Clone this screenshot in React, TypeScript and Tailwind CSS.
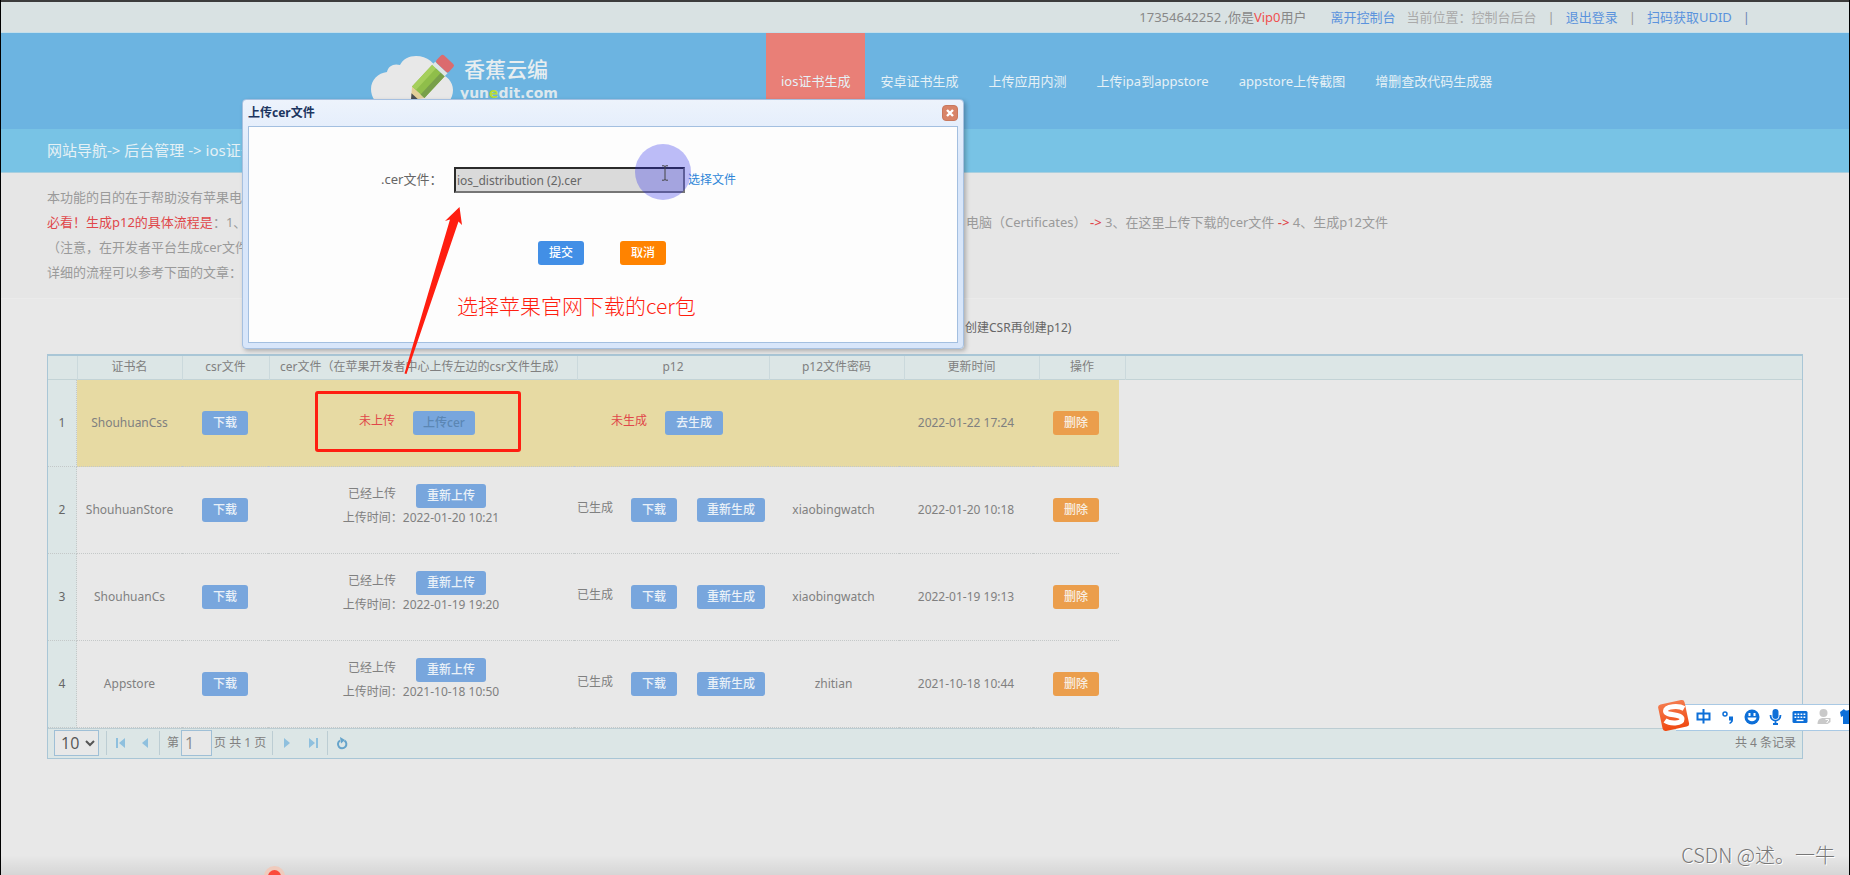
import type { ReactNode } from "react";

type Cert = {
  name: string;
  uploadedAt?: string;
  password?: string;
  updatedAt: string;
};

const certs: Cert[] = [
  { name: "ShouhuanCss", updatedAt: "2022-01-22 17:24" },
  { name: "ShouhuanStore", uploadedAt: "2022-01-20 10:21", password: "xiaobingwatch", updatedAt: "2022-01-20 10:18" },
  { name: "ShouhuanCs", uploadedAt: "2022-01-19 19:20", password: "xiaobingwatch", updatedAt: "2022-01-19 19:13" },
  { name: "Appstore", uploadedAt: "2021-10-18 10:50", password: "zhitian", updatedAt: "2021-10-18 10:44" },
];

const navItems = ["ios证书生成", "安卓证书生成", "上传应用内测", "上传ipa到appstore", "appstore上传截图", "增删查改代码生成器"];

function Btn({ children, className = "" }: { children: ReactNode; className?: string }) {
  return (
    <button type="button" className={`h-6 shrink-0 rounded-[3px] text-center text-xs font-medium ${className}`}>
      {children}
    </button>
  );
}

function Logo() {
  return (
    <a href="#" className="flex items-start">
      <svg width="86" height="66" viewBox="0 0 86 66">
        <path
          d="M15 62C6 60 1 52 1 44c0-9 7-16 16-17 1-6 7-9 13-7C33 14 39 11 46 11c11 0 20 7 22 17 9 2 15 9 15 17 0 9-6 16-14 17z"
          fill="#e8e8e8"
        />
        <g transform="translate(41 55) rotate(-47) scale(1.06)">
          <path d="M0 0 L10 -8 L10 8 Z" fill="#e3cf98" />
          <path d="M0 0 L5 -4 L5 4 Z" fill="#4a4f55" />
          <rect x="10" y="-8" width="28" height="16" fill="#8fbe4a" />
          <rect x="10" y="-8" width="28" height="5" fill="#a5cf5c" />
          <rect x="10" y="3" width="28" height="5" fill="#789f4a" />
          <rect x="38" y="-8" width="4" height="16" fill="#dfe6e4" />
          <rect x="42" y="-8" width="10" height="16" rx="2" fill="#db6b6e" />
        </g>
      </svg>
      <div className="pt-[10px] pl-1">
        <div className="pl-1 text-[21px] leading-7 font-medium text-[#e8eef0]">香蕉云编</div>
        <div className="font-['DejaVu_Sans',sans-serif] text-sm leading-5 font-bold text-[#dde8ee]">
          yun<span className="text-[#b9dc3c]">e</span>dit.com
        </div>
      </div>
    </a>
  );
}

function TopBar() {
  return (
    <div className="flex h-[33px] items-center justify-end border-t-2 border-b border-t-[#3c3c3c] border-b-[#c5dfea] bg-[#d9e2e3] pt-[2px] pr-[99px] text-[13px] text-[#999]">
      <span className="mr-6 text-[#888]">
        17354642252 ,你是<span className="text-[#f0504f]">Vip0</span>用户
      </span>
      <a href="#" className="mr-[11px] text-[#5b93dd]">离开控制台</a>
      <span className="mr-[11px] text-[#aaa]">当前位置：控制台后台</span>
      <span className="mr-[11px]">|</span>
      <a href="#" className="mr-[11px] text-[#5b93dd]">退出登录</a>
      <span className="mr-[11px]">|</span>
      <a href="#" className="mr-[11px] text-[#5b93dd]">扫码获取UDID</a>
      <span className="text-[#6d86b5]">|</span>
    </div>
  );
}

function Header() {
  return (
    <header>
      <div className="h-24 bg-[#6cb4e1]">
        <div className="mx-auto flex h-full max-w-[1170px] pl-[30px]">
          <div className="w-[396px] shrink-0 pt-3">
            <Logo />
          </div>
          <nav className="flex text-[13px] whitespace-nowrap text-[#e6f1f6]">
            {navItems.map((item, i) => (
              <a key={item} href="#" className={`px-[15px] pt-[38px] leading-5 ${i === 0 ? "bg-[#e97f77]" : ""}`}>
                {item}
              </a>
            ))}
          </nav>
        </div>
      </div>
      <div className="flex h-11 items-center border-b border-[#a9cfdf] bg-[#78c3e5] pl-[46px] text-[15px] text-[#e6f1f5]">
        网站导航-&gt; 后台管理 -&gt; ios证书生成
      </div>
    </header>
  );
}

function Intro() {
  return (
    <section className="h-[126px] border-b border-[#ebebeb] bg-[#e6e6e6] pt-3 pl-[46px] text-[13px] leading-[25px] whitespace-nowrap text-[#9a9a9a]">
      <p>本功能的目的在于帮助没有苹果电脑的开发者</p>
      <div className="flex">
        <p className="w-[919px] shrink-0">
          <span className="text-[#e0474a]">必看！生成p12的具体流程是</span>：1、在这里创建csr文件
        </p>
        <p>
          电脑（Certificates） <span className="font-medium text-[#e0474a]">-&gt;</span> 3、在这里上传下载的cer文件{" "}
          <span className="font-medium text-[#e0474a]">-&gt;</span> 4、生成p12文件
        </p>
      </div>
      <p>（注意，在开发者平台生成cer文件）</p>
      <p>
        详细的流程可以参考下面的文章：
        <a href="#" className="text-[#5b93dd]">https</a>
      </p>
    </section>
  );
}

const head = "border-r border-[#cbd9dc] font-normal";
const cell = "border-b border-dotted border-[#c4c8c8] p-0";

function CertTable() {
  return (
    <div className="mx-[46px] border border-t-2 border-[#a9c6d6] text-xs text-[#808080]">
      <table className="w-full table-fixed border-collapse bg-[#dce6e6]">
        <thead>
          <tr className="h-[23px] border-b border-[#c3d3d6]">
            <th className={`w-[29px] ${head}`} aria-label="序号" />
            <th className={`w-[105px] ${head}`}>证书名</th>
            <th className={`w-[87px] ${head}`}>csr文件</th>
            <th className={`w-[308px] whitespace-nowrap ${head}`}>cer文件（在苹果开发者中心上传左边的csr文件生成）</th>
            <th className={`w-[192px] ${head}`}>p12</th>
            <th className={`w-[135px] ${head}`}>p12文件密码</th>
            <th className={`w-[135px] ${head}`}>更新时间</th>
            <th className={`w-[86px] ${head}`}>操作</th>
            <td />
          </tr>
        </thead>
      </table>
      <table className="w-[1071px] table-fixed border-separate border-spacing-0 text-center whitespace-nowrap">
        <colgroup>
          <col className="w-[29px]" />
          <col className="w-[105px]" />
          <col className="w-[86px]" />
          <col className="w-[306px]" />
          <col className="w-[194px]" />
          <col className="w-[131px]" />
          <col className="w-[134px]" />
          <col className="w-[86px]" />
        </colgroup>
        <tbody>
          {certs.map((c, i) => (
            <tr key={c.name} className={`h-[87px] ${c.uploadedAt ? "" : "bg-[#e7daa3]"}`}>
              <td className={`border-r bg-[#dce6e6] text-[#666] ${cell}`}>{i + 1}</td>
              <td className={cell}>{c.name}</td>
              <td className={cell}>
                <Btn className="w-[46px] bg-[#78a6dd] text-[#eaf1f8]">下载</Btn>
              </td>
              <td className={cell}>
                {c.uploadedAt ? (
                  <div className="pb-2">
                    <div className="flex justify-center gap-[20px] pr-2">
                      <span className="leading-5">已经上传</span>
                      <Btn className="w-[70px] bg-[#78a6dd] text-[#eaf1f8]">重新上传</Btn>
                    </div>
                    <div className="leading-5">上传时间：{c.uploadedAt}</div>
                  </div>
                ) : (
                  <div className="flex justify-center gap-[18px] pr-2">
                    <span className="leading-5 text-[#e0474a]">未上传</span>
                    <Btn className="w-[62px] bg-[#78a6dd] text-[#5b86b4]">上传cer</Btn>
                  </div>
                )}
              </td>
              <td className={cell}>
                {c.uploadedAt ? (
                  <div className="flex justify-center">
                    <span className="mr-[18px] leading-5">已生成</span>
                    <Btn className="mr-5 w-[46px] bg-[#78a6dd] text-[#eaf1f8]">下载</Btn>
                    <Btn className="w-[68px] bg-[#78a6dd] text-[#eaf1f8]">重新生成</Btn>
                  </div>
                ) : (
                  <div className="flex justify-center gap-[18px] pr-2">
                    <span className="leading-5 text-[#e0474a]">未生成</span>
                    <Btn className="w-[58px] bg-[#78a6dd] text-[#eaf1f8]">去生成</Btn>
                  </div>
                )}
              </td>
              <td className={cell}>{c.password}</td>
              <td className={cell}>{c.updatedAt}</td>
              <td className={cell}>
                <Btn className="w-[46px] bg-[#eb9e4c] text-[#f8eee2]">删除</Btn>
              </td>
            </tr>
          ))}
        </tbody>
      </table>
      <Pager />
    </div>
  );
}

function PagerIcon({ label, d }: { label: string; d: string }) {
  return (
    <button type="button" aria-label={label} className="flex h-6 w-6 items-center justify-center">
      <svg width="12" height="12" viewBox="0 0 12 12" fill="#8fc0de">
        <path d={d} />
      </svg>
    </button>
  );
}

function Pager() {
  return (
    <div className="flex h-[30px] items-center border-t border-[#bccdd3] bg-[#dce6e6] px-[6px]">
      <div className="relative">
        <select
          aria-label="每页条数"
          className="h-[26px] w-[45px] appearance-none border border-[#9fbfd6] bg-[#e8e8e8] pl-[6px] font-['Open_Sans',sans-serif] text-base leading-5 text-[#555]"
        >
          <option>10</option>
        </select>
        <svg className="pointer-events-none absolute top-[10px] right-[4px]" width="10" height="7" viewBox="0 0 10 7">
          <path d="M1 1l4 4 4-4" fill="none" stroke="#555" strokeWidth="2" />
        </svg>
      </div>
      <span className="mr-[2px] ml-[7px] h-6 w-px bg-[#bccdd3]" />
      <PagerIcon label="首页" d="M1 1h2v10H1zM10 1v10L4 6z" />
      <PagerIcon label="上一页" d="M9 1v10L3 6z" />
      <span className="ml-[2px] h-6 w-px bg-[#bccdd3]" />
      <label className="ml-[7px] flex items-center gap-[2px]">
        第
        <input
          defaultValue="1"
          className="h-[26px] w-[31px] border border-[#9fbfd6] bg-[#e8e8e8] pl-[3px] font-['Open_Sans',sans-serif] text-base text-[#888]"
        />
      </label>
      <span className="mr-[6px] ml-[2px]">页 共 1 页</span>
      <span className="h-6 w-px bg-[#bccdd3]" />
      <span className="flex gap-[2px] px-[2px]">
        <PagerIcon label="下一页" d="M3 1v10l6-5z" />
        <PagerIcon label="末页" d="M2 1v10l6-5zM9 1h2v10H9z" />
      </span>
      <span className="mr-[2px] h-6 w-px bg-[#bccdd3]" />
      <button type="button" aria-label="刷新" className="flex h-6 w-6 items-center justify-center">
        <svg width="12" height="13" viewBox="0 0 12 13">
          <path d="M4 3.5A4.2 4.2 0 1 0 8.5 3.6" fill="none" stroke="#66a4cb" strokeWidth="2" />
          <path d="M4 0l5 3-4 3.5z" fill="#66a4cb" />
        </svg>
      </button>
      <span className="ml-auto">共 4 条记录</span>
    </div>
  );
}

function UploadDialog() {
  return (
    <div
      role="dialog"
      aria-label="上传cer文件"
      className="absolute top-[99px] left-[241px] flex h-[250px] w-[722px] flex-col rounded-[4px] border border-[#a6c0e0] bg-linear-to-b from-[#edf3fc] to-[#d8e6fa] to-30% px-[5px] pb-[5px] shadow-[2px_2px_4px_rgba(0,0,0,0.25)]"
    >
      <div className="flex h-[26px] items-center justify-between">
        <h2 className="text-xs font-bold text-[#1c3560]">上传cer文件</h2>
        <button
          type="button"
          aria-label="关闭"
          className="flex h-4 w-4 items-center justify-center rounded-[4px] border border-[#c8785e] bg-[#d88468]"
        >
          <svg width="8" height="8" viewBox="0 0 8 8">
            <path d="M1 1l6 6M7 1L1 7" stroke="#fff" strokeWidth="2.4" />
          </svg>
        </button>
      </div>
      <form className="flex flex-1 flex-col border border-[#a3bfe0] bg-[#fdfdfd] pt-10">
        <div className="flex items-center pl-[132px] text-[13px] text-[#666]">
          <label htmlFor="cer" className="w-[73px]">.cer文件：</label>
          <input
            id="cer"
            readOnly
            defaultValue="ios_distribution (2).cer"
            className="mr-[3px] h-[26px] w-[231px] border-2 border-t-[#2b2b2b] border-r-[#767676] border-b-[#767676] border-l-[#2b2b2b] bg-[#dadada] px-px text-xs text-[#666]"
          />
          <a href="#" className="text-xs text-[#2e86d8]">选择文件</a>
        </div>
        <div className="flex gap-9 pt-12 pl-[289px]">
          <Btn className="w-[46px] bg-[#428fe6] text-white">提交</Btn>
          <Btn className="w-[46px] bg-[#ff8300] text-white">取消</Btn>
        </div>
      </form>
    </div>
  );
}

/* Tutorial marks drawn over the page: arrow, frame, note, pointer */
function Annotations() {
  return (
    <div className="pointer-events-none">
      <svg className="absolute top-[205px] left-[399px]" width="70" height="170" viewBox="0 0 70 170">
        <path d="M4.500 168.500L50 14.500L45 16L59.500 2L62 20L58.500 16.500L6.500 169Z" fill="#ff1e10" />
      </svg>
      <div className="absolute top-[391px] left-[314px] h-[61px] w-[206px] rounded-[3px] border-3 border-[#ff1e10]" />
      <p className="absolute top-[290px] left-[456px] font-['Noto_Sans_CJK_SC',sans-serif] text-[21px] leading-[30px] font-light whitespace-nowrap text-[#ff1e10]">
        选择苹果官网下载的cer包
      </p>
      <div className="absolute top-[144px] left-[634px] h-14 w-14 rounded-full bg-[rgba(40,40,235,0.3)]" />
      <svg className="absolute top-[165px] left-[660px]" width="8" height="16" viewBox="0 0 8 16">
        <path d="M1 .8h2L4 1.500 5 .8h2M4 1.500v13M1 15.200h2l1-.7 1 .7h2" fill="none" stroke="#444" />
      </svg>
    </div>
  );
}

function ImeBar() {
  return (
    <div className="absolute top-[699px] right-0 h-8 w-[191px] overflow-hidden">
      <div className="mt-[5px] ml-[18px] h-[27px] border-y border-[#a9c9e4] bg-white" />
      <svg className="absolute inset-0" width="191" height="32" viewBox="0 0 191 32" fill="none">
        <defs>
          <linearGradient id="ime" x1="0" y1="0" x2="0" y2="1">
            <stop offset="0" stopColor="#f47a4c" />
            <stop offset="1" stopColor="#f04a12" />
          </linearGradient>
        </defs>
        <rect x="2" y="3" width="27" height="27" rx="3" transform="rotate(-12 15.500 16)" fill="url(#ime)" />
        <path
          d="M26 9.500C21 6.500 7.500 7 7.500 12c0 5 16.500 2.500 16.500 8 0 5-12 5-17 1.500"
          stroke="#fff"
          strokeWidth="5"
        />
        {/* 中 */}
        <path d="M39.500 14.500h12v6h-12zM45.500 10v14.500" stroke="#0d6fd8" strokeWidth="2" />
        {/* full-stop and comma */}
        <circle cx="67" cy="15" r="2" stroke="#0d6fd8" strokeWidth="1.500" />
        <path d="M71 17.500h4v3.500c0 2-1.500 3.500-3.500 4v-1.500c1-.5 1.500-1 1.500-2h-2z" fill="#0d6fd8" />
        <circle cx="94" cy="18" r="7.500" fill="#0d6fd8" />
        <path d="M90.500 14h2v3h-2zM95.500 14h2v3h-2zM89.500 18.500h9c-.5 5-8.500 5-9 0z" fill="#fff" />
        <rect x="114.500" y="10" width="6" height="10" rx="3" fill="#0d6fd8" />
        <path d="M112.500 16c0 7.500 10 7.500 10 0M117.500 21.500v4M115 25h5" stroke="#0d6fd8" strokeWidth="1.800" />
        <rect x="134.500" y="12" width="15" height="12" rx="1.500" fill="#0d6fd8" />
        <path d="M136.500 15.200h11M136.500 18.200h11" stroke="#fff" strokeWidth="1.600" strokeDasharray="1.800 1.200" />
        <path d="M138.500 21.400h7" stroke="#fff" strokeWidth="1.400" />
        <circle cx="165.500" cy="14" r="4" fill="#c9c9c9" />
        <path d="M159.500 25c0-4 2-6 6-6h7v4l-3 2z" fill="#c9c9c9" />
        <path d="M167.500 20.500h3v1.500l-1.500 1v1" stroke="#fff" />
        <path d="M182 13l4-3c1 2 5 2 6 0v15h-7v-8l-2 1z" fill="#0d6fd8" />
      </svg>
    </div>
  );
}

export default function App() {
  return (
    <div className="relative min-h-screen overflow-hidden border-x border-black bg-[#e8e8e8] font-['Noto_Sans','Noto_Sans_CJK_SC',sans-serif]">
      <TopBar />
      <Header />
      <Intro />
      <p className="flex h-[55px] items-center pt-[3px] pl-[964px] text-xs text-[#666]">创建CSR再创建p12)</p>
      <CertTable />

      <UploadDialog />
      <Annotations />
      <ImeBar />

      <div className="absolute bottom-0 left-0 h-5 w-full bg-linear-to-b from-transparent to-black/8" />
      <div className="absolute -bottom-3 left-[263px] flex h-[21px] w-[21px] items-center justify-center rounded-full bg-[#f0cbbd]">
        <span className="h-[13px] w-[13px] rounded-full bg-[#fb4a3c]" />
      </div>
      <p className="absolute right-[14px] bottom-[6px] font-['Noto_Sans_CJK_SC',sans-serif] text-xl leading-7 font-light text-[#777] [text-shadow:1px_1px_0_#fff]">
        CSDN @述。一牛
      </p>
    </div>
  );
}
